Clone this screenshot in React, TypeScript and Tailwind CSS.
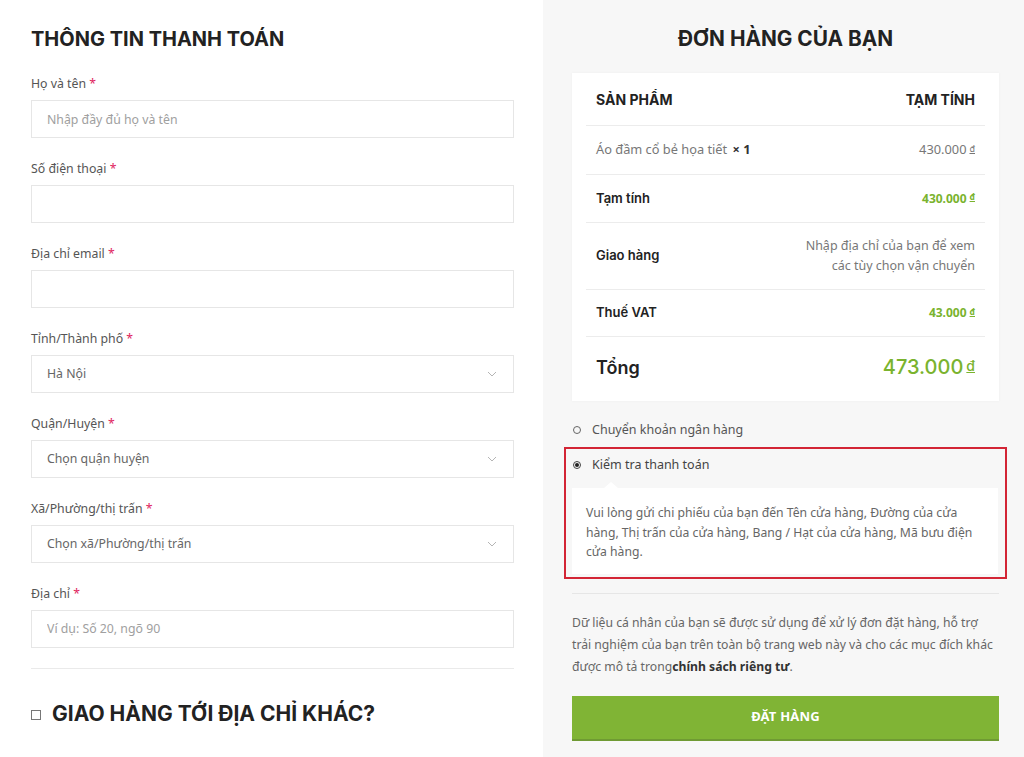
import React from "react";

const heading = "font-['Inter',sans-serif] font-bold text-[#222]";
const body = "font-['Lato','Liberation Sans',sans-serif]";

interface FieldProps {
  label: string;
  placeholder?: string;
  value?: string;
  select?: boolean;
}

const Field: React.FC<FieldProps> = ({ label, placeholder, value, select }) => {
  return (
    <div className="mb-[21px]">
      <label className="block text-[12.3px] leading-[20px] text-[#555] mb-[6px]">
        {label} <span className="text-[#e0245e]">*</span>
      </label>
      <div className="relative h-[38px] border-[1.5px] border-[#e6e6e6] bg-white flex items-center pl-[15px] pr-[16px]">
        {select ? (
          <>
            <span className="flex-1 text-[12.3px] text-[#666]">{value}</span>
            <svg width="10" height="6" viewBox="0 0 10 6" className="text-[#b5b5b5]">
              <polyline points="1,1 5,5 9,1" fill="none" stroke="currentColor" strokeWidth="1" />
            </svg>
          </>
        ) : (
          <input
            className="w-full h-full bg-transparent text-[12.3px] text-[#555] placeholder:text-[#a0a0a0] outline-none"
            placeholder={placeholder}
          />
        )}
      </div>
    </div>
  );
};

const Row: React.FC<{ label: string; children: React.ReactNode; className?: string }> = ({
  label,
  children,
  className,
}) => (
  <div className={`flex items-center justify-between border-b border-[#ececec] px-[10px] ${className ?? ""}`}>
    <span className="font-['Inter',sans-serif] font-semibold text-[13px] text-[#222]">{label}</span>
    {children}
  </div>
);

const Dong = () => <span className="text-[0.7em] underline align-[0.25em] ml-[3px]">đ</span>;

export default function App() {
  return (
    <div className={`${body} flex w-[1024px] h-[757px] overflow-hidden bg-white`}>
      {/* billing form */}
      <div className="w-[543px] shrink-0 pl-[31px] pr-[29px] pt-[25px]">
        <h2 className={`${heading} text-[20px] leading-[28px] mb-[21px]`}>THÔNG TIN THANH TOÁN</h2>
        <Field label="Họ và tên" placeholder="Nhập đầy đủ họ và tên" />
        <Field label="Số điện thoại" />
        <Field label="Địa chỉ email" />
        <Field label="Tỉnh/Thành phố" value="Hà Nội" select />
        <Field label="Quận/Huyện" value="Chọn quận huyện" select />
        <Field label="Xã/Phường/thị trấn" value="Chọn xã/Phường/thị trấn" select />
        <div className="mb-[20px]">
          <label className="block text-[12.3px] leading-[20px] text-[#555] mb-[6px]">
            Địa chỉ <span className="text-[#e0245e]">*</span>
          </label>
          <div className="h-[38px] border-[1.5px] border-[#e6e6e6] flex items-center pl-[15px]">
            <input
              className="w-full bg-transparent text-[12.3px] placeholder:text-[#a0a0a0] outline-none"
              placeholder="Ví dụ: Số 20, ngõ 90"
            />
          </div>
        </div>
        <div className="border-t border-[#eaeaea]" />
        <div className="flex items-center mt-[29px] h-[32px]">
          <span className="w-[10px] h-[10px] border border-[#777] mr-[11px] mt-[2px]" />
          <h3 className={`${heading} text-[21px] leading-[32px]`}>GIAO HÀNG TỚI ĐỊA CHỈ KHÁC?</h3>
        </div>
        <div className="mt-[28px] text-[12.3px] text-[#555]">Chỉ chú đơn hàng (tùy chọn)</div>
      </div>

      {/* order summary */}
      <div className="flex-1 bg-[#f7f7f7] pl-[29px] pr-[25px] pt-[25px]">
        <h2 className={`${heading} text-[20.8px] leading-[28px] text-center mb-[20px]`}>ĐƠN HÀNG CỦA BẠN</h2>

        <div className="bg-white px-[14px] pt-[17px] shadow-[0_0_3px_rgba(0,0,0,0.04)]">
          <div className="flex items-center justify-between border-b border-[#ececec] px-[10px] pb-[15px]">
            <span className={`${heading} text-[14px] leading-[20px]`}>SẢN PHẨM</span>
            <span className={`${heading} text-[14px] leading-[20px]`}>TẠM TÍNH</span>
          </div>
          <div className="flex items-center justify-between border-b border-[#ececec] px-[10px] h-[49px] text-[12.8px]">
            <span className="text-[#777]">
              Áo đầm cổ bẻ họa tiết <strong className="text-[#333] ml-[2px]">× 1</strong>
            </span>
            <span className="text-[#777]">
              430.000
              <Dong />
            </span>
          </div>
          <Row label="Tạm tính" className="h-[48px]">
            <span className="text-[12px] font-bold text-[#7ab32e]">
              430.000
              <Dong />
            </span>
          </Row>
          <Row label="Giao hàng" className="h-[67px]">
            <span className="text-right text-[12.5px] leading-[20px] text-[#777]">
              Nhập địa chỉ của bạn để xem
              <br />
              các tùy chọn vận chuyển
            </span>
          </Row>
          <Row label="Thuế VAT" className="h-[47px]">
            <span className="text-[12px] font-bold text-[#7ab32e]">
              43.000
              <Dong />
            </span>
          </Row>
          <div className="flex items-center justify-between px-[10px] h-[64px] pb-[4px]">
            <span className="font-['Inter',sans-serif] font-semibold text-[18px] text-[#222]">Tổng</span>
            <span className="font-['Inter',sans-serif] font-medium text-[20px] text-[#7ab32e]">
              473.000
              <Dong />
            </span>
          </div>
        </div>

        {/* payment methods */}
        <div className="mt-[19px] flex items-center h-[20px] text-[12.5px] text-[#555]">
          <span className="w-[8px] h-[8px] rounded-full border border-[#666] ml-[1px] mr-[11px]" />
          Chuyển khoản ngân hàng
        </div>
        <div className="-mx-[8px] mt-[7px] border-2 border-[#d32535] pl-[6px] pr-[7px] pt-[6px] pb-[3px]">
          <div className="flex items-center h-[20px] text-[12.5px] text-[#444]">
            <span className="relative w-[8px] h-[8px] rounded-full border border-[#444] ml-[1px] mr-[11px] flex items-center justify-center">
              <span className="w-[4px] h-[4px] rounded-full bg-[#222]" />
            </span>
            Kiểm tra thanh toán
          </div>
          <div className="relative mt-[13px] bg-white px-[14px] pt-[15px] pb-[12px] text-[12.2px] leading-[19.5px] text-[#666]">
            <span className="absolute -top-[6px] left-[32px] w-0 h-0 border-l-[7px] border-r-[7px] border-b-[6px] border-l-transparent border-r-transparent border-b-white" />
            Vui lòng gửi chi phiếu của bạn đến Tên cửa hàng, Đường của cửa hàng, Thị trấn của cửa hàng, Bang / Hạt
            của cửa hàng, Mã bưu điện cửa hàng.
          </div>
        </div>
        <div className="mt-[14px] border-t border-[#e6e6e6]" />
        <p className="mt-[18px] text-[12.2px] leading-[22px] text-[#666]">
          Dữ liệu cá nhân của bạn sẽ được sử dụng để xử lý đơn đặt hàng, hỗ trợ trải nghiệm của bạn trên toàn bộ
          trang web này và cho các mục đích khác được mô tả trong
          <strong className="text-[#333]">chính sách riêng tư</strong>.
        </p>
        <button
          type="button"
          className="mt-[18px] w-full h-[45px] bg-[#80b435] border-b-2 border-[#6f9a33] text-white font-bold text-[13px] tracking-[0.2px]"
        >
          ĐẶT HÀNG
        </button>
      </div>
    </div>
  );
}
